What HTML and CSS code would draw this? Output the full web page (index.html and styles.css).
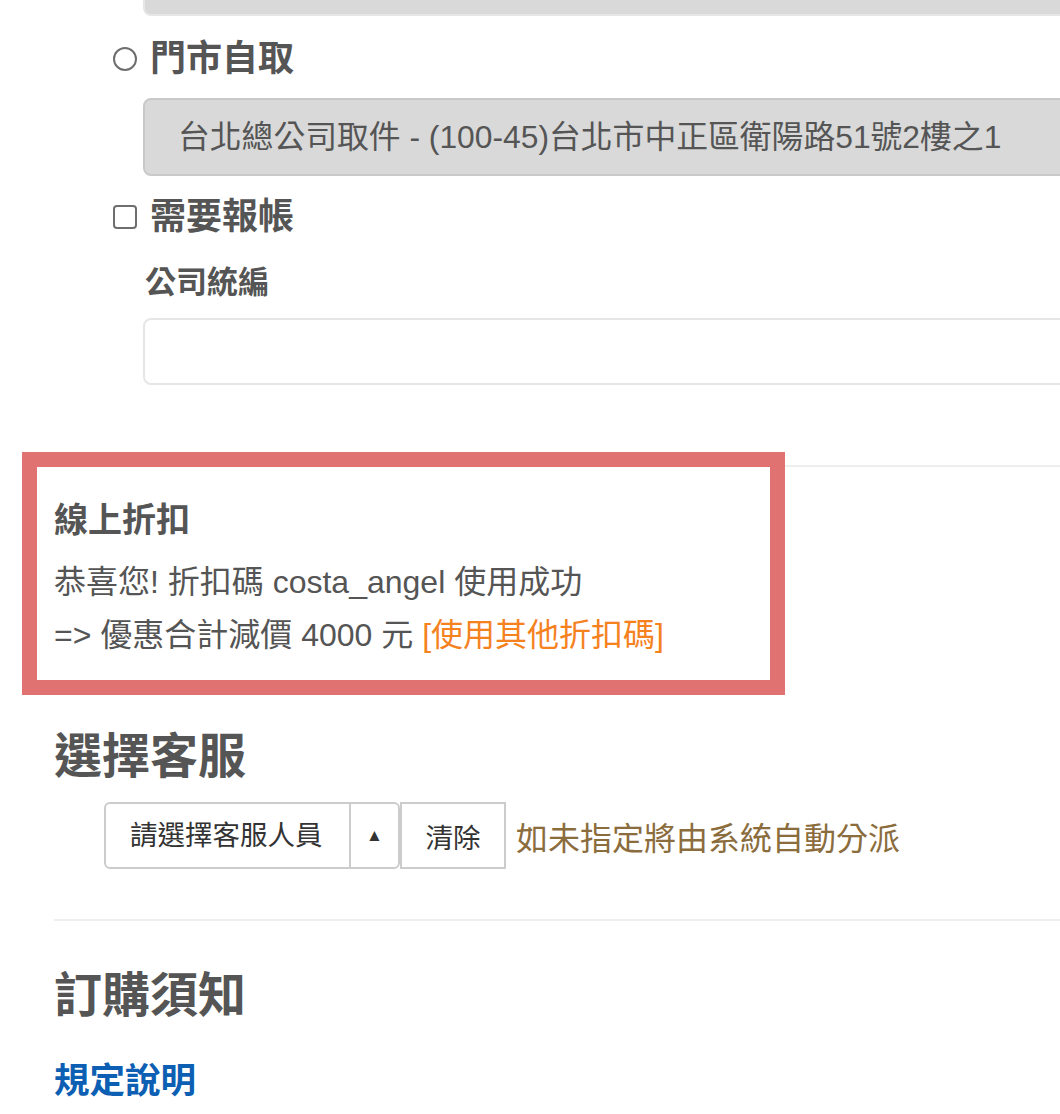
FILE: index.html
```html
<!DOCTYPE html>
<html lang="zh-Hant">
<head>
  <meta charset="UTF-8">
  <title>訂購資料</title>
  <meta name="viewport" content="width=device-width, initial-scale=1.0">
  <link rel="stylesheet" href="styles.css">
</head>
<body>
  <main class="page">
    <div class="field field-top"></div>

    <label class="opt opt-pickup">
      <span class="radio"></span>
      <span class="opt-label">門市自取</span>
    </label>
    <div class="field field-select">台北總公司取件 - (100-45)台北市中正區衛陽路51號2樓之1</div>

    <label class="opt opt-invoice">
      <span class="check"></span>
      <span class="opt-label">需要報帳</span>
    </label>
    <div class="sub-label">公司統編</div>
    <div class="field field-input"></div>

    <hr class="rule rule-discount">

    <section class="discount">
      <h3>線上折扣</h3>
      <p>恭喜您! 折扣碼 costa_angel 使用成功</p>
      <p>=&gt; 優惠合計減價 4000 元 <a href="#" class="other-code">[使用其他折扣碼]</a></p>
    </section>

    <h2 class="title title-service">選擇客服</h2>
    <div class="service-row">
      <div class="picker">
        <span class="picker-text">請選擇客服人員</span>
        <span class="picker-arrow">&#9650;</span>
      </div>
      <button class="clear-btn">清除</button>
      <span class="hint">如未指定將由系統自動分派</span>
    </div>

    <hr class="rule rule-notice">

    <h2 class="title title-notice">訂購須知</h2>
    <a href="#" class="rules-link">規定說明</a>
  </main>
</body>
</html>
```

FILE: styles.css
```css
body {
  margin: 0;
  padding: 0;
  background: #fff;
  color: #555;
  font-family: "Liberation Sans", "Noto Sans CJK TC", sans-serif;
}

.page {
  overflow: hidden;
  padding-bottom: 20px;
}

.field {
  margin-left: 143px;
  margin-right: -20px;
  box-sizing: border-box;
  border-radius: 8px;
}

.field-top {
  margin-top: -60px;
  height: 76px;
  background: #d9d9d9;
  border: 2px solid #e6e6e6;
  border-top: none;
}

.opt {
  display: flex;
  align-items: center;
  gap: 13px;
  margin-left: 113px;
  height: 50px;
}

.opt-pickup {
  margin-top: 18px;
}

.opt-invoice {
  margin-top: 16px;
}

.opt-label {
  font-size: 36px;
  font-weight: bold;
  line-height: 50px;
}

.radio {
  width: 24px;
  height: 24px;
  box-sizing: border-box;
  border: 2px solid #6e6e6e;
  border-radius: 50%;
}

.check {
  width: 24px;
  height: 24px;
  box-sizing: border-box;
  border: 2px solid #6e6e6e;
  border-radius: 4px;
}

.field-select {
  margin-top: 14px;
  height: 78px;
  background: #d9d9d9;
  border: 2px solid #c9c9c9;
  padding-left: 33px;
  font-size: 31.8px;
  line-height: 74px;
  color: #555;
  white-space: nowrap;
}

.sub-label {
  margin-top: 21px;
  margin-left: 145px;
  font-size: 31px;
  font-weight: bold;
  line-height: 40px;
}

.field-input {
  margin-top: 15px;
  height: 67px;
  border: 2px solid #e6e6e6;
  background: #fff;
}

.rule {
  border: none;
  height: 2px;
  background: #eee;
  margin: 0 0 0 54px;
}

.rule-discount {
  margin-top: 80px;
}

.discount {
  margin-left: 37px;
  width: 733px;
  height: 213px;
  box-sizing: border-box;
  padding: 31px 0 0 17px;
  outline: 15px solid #e07272;
}

.discount h3 {
  margin: 0 0 14px;
  font-size: 34px;
  font-weight: bold;
  line-height: 44px;
}

.discount p {
  margin: 0;
  font-size: 32px;
  line-height: 53px;
  white-space: nowrap;
}

.other-code {
  color: #f5821f;
  text-decoration: none;
}

.title {
  margin: 0 0 0 54px;
  font-size: 48px;
  font-weight: bold;
  line-height: 60px;
}

.title-service {
  margin-top: 47px;
}

.service-row {
  display: flex;
  align-items: center;
  margin: 15px 0 0 104px;
  height: 67px;
}

.picker {
  display: flex;
  height: 67px;
  box-sizing: border-box;
  border: 2px solid #ccc;
  border-radius: 6px;
  color: #333;
  font-size: 27.5px;
}

.picker-text {
  width: 245px;
  box-sizing: border-box;
  padding-left: 24px;
  line-height: 63px;
  border-right: 2px solid #ccc;
}

.picker-arrow {
  width: 47px;
  text-align: center;
  font-size: 17px;
  line-height: 63px;
}

.clear-btn {
  width: 106px;
  height: 67px;
  margin: 0;
  padding: 0;
  border: 2px solid #ccc;
  border-radius: 0;
  background: #fff;
  color: #333;
  font-family: inherit;
  font-size: 27.5px;
}

.hint {
  margin-left: 10px;
  color: #8b6c3c;
  font-size: 32px;
}

.rule-notice {
  margin-top: 50px;
}

.title-notice {
  margin-top: 45px;
}

.rules-link {
  display: block;
  margin: 32px 0 0 54px;
  color: #0d5fb3;
  font-size: 35.5px;
  font-weight: bold;
  line-height: 46px;
  text-decoration: none;
}
```
